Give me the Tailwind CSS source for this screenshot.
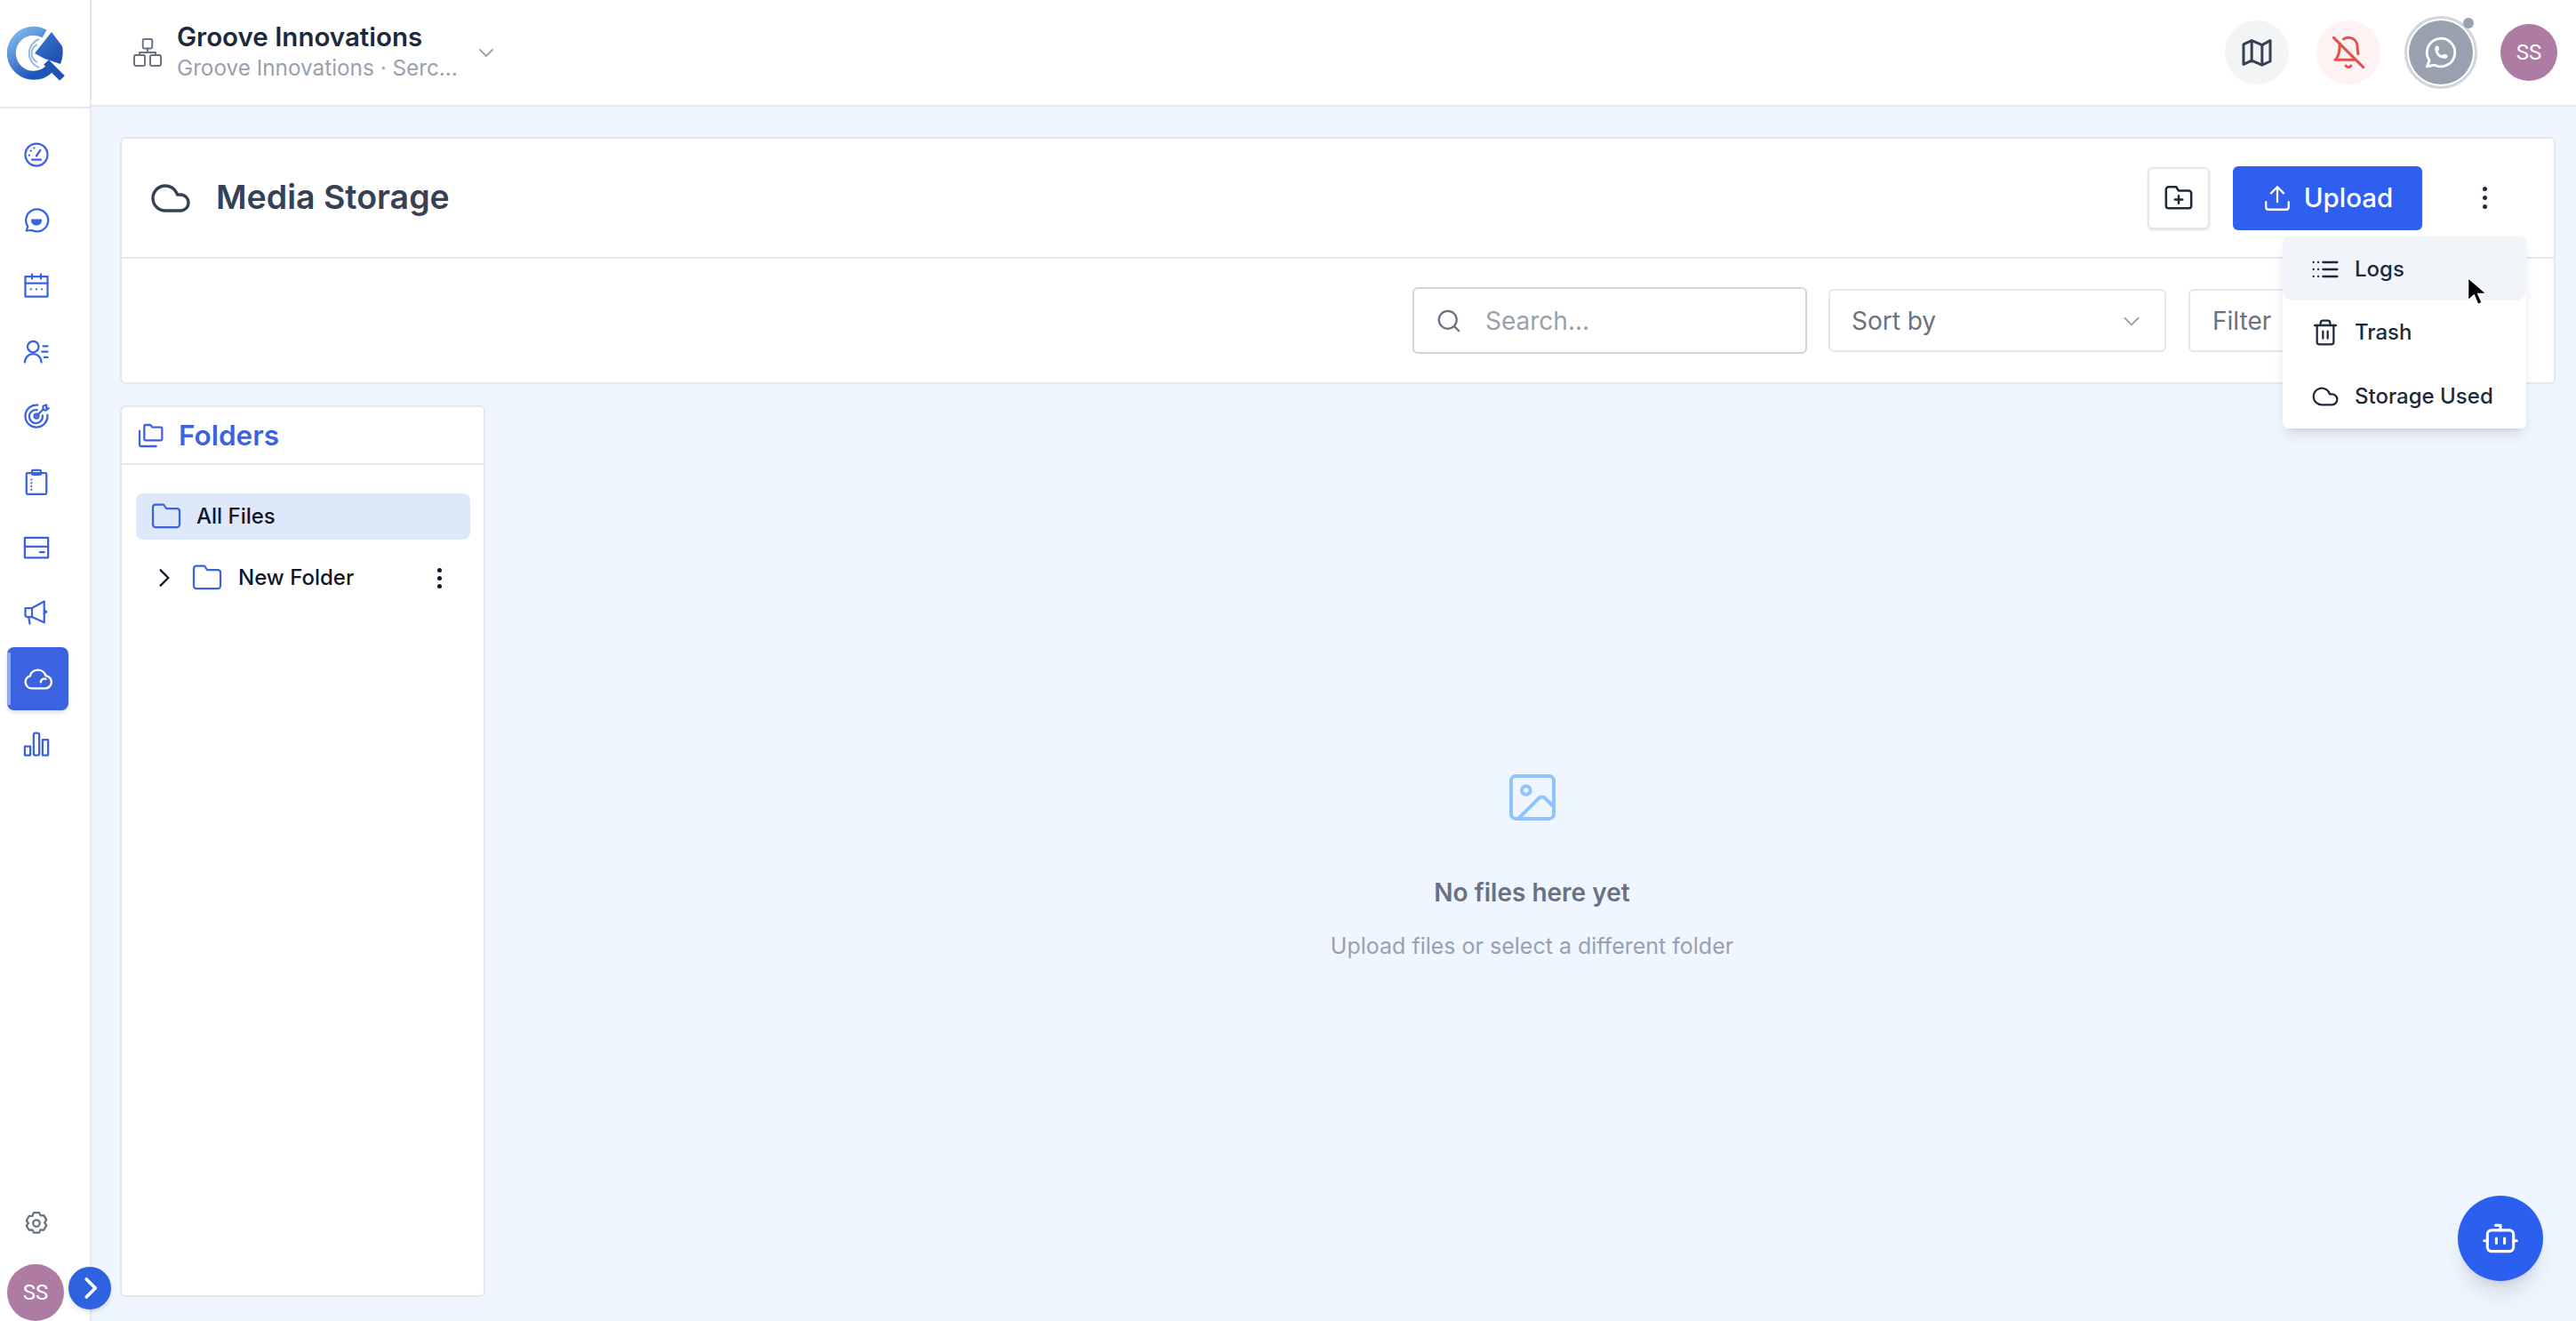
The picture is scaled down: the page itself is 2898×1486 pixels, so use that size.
<!DOCTYPE html>
<html lang="en">
  <head>
    <meta charset="UTF-8" />
    <title>Media Storage</title>
    <script src="https://cdn.jsdelivr.net/npm/@tailwindcss/browser@4"></script>
  </head>
  <body class="bg-blue-50 font-['Inter',sans-serif] text-gray-800">
    <div class="relative flex h-[1486px] w-[2898px] overflow-hidden">
      <!-- sidebar -->
      <aside class="flex w-[103px] shrink-0 flex-col border-r-2 border-gray-200 bg-white text-[#3b63e0]">
        <div class="flex h-[122px] shrink-0 items-center border-b-2 border-gray-200 pl-[8px]">
          <svg width="70" height="64" viewBox="0 0 70 64" fill="none">
            <defs>
              <linearGradient id="logoRing" x1="0" y1="0" x2="0.6" y2="1">
                <stop offset="0" stop-color="#84bcf0" />
                <stop offset="1" stop-color="#1f55b8" />
              </linearGradient>
              <linearGradient id="logoTri" x1="0" y1="0" x2="1" y2="1">
                <stop offset="0" stop-color="#3d7ad8" />
                <stop offset="1" stop-color="#1c4aa8" />
              </linearGradient>
            </defs>
            <path d="M42 10A25 25 0 1 0 47 50" stroke="url(#logoRing)" stroke-width="10" />
            <path d="M36 16A17 17 0 0 0 36 48" stroke="#9ab9e3" stroke-width="2" />
            <path d="M34 22A11 11 0 0 0 34 42" stroke="#9ab9e3" stroke-width="2" />
            <path d="M50 8L62 24Q64 34 60 44L42 38L31 32Z" fill="url(#logoTri)" />
            <path d="M44 42L62 60" stroke="#1f55b8" stroke-width="8" />
          </svg>
        </div>
        <nav class="flex flex-col gap-[2.7px] pt-[16px]">
          <a class="flex h-[71px] items-center justify-center pr-[20px]">
            <svg class="size-[30px]" viewBox="0 0 24 24" fill="none" stroke="currentColor" stroke-width="1.8" stroke-linecap="round" stroke-linejoin="round"><circle cx="12" cy="12" r="10" /><path d="M12 13l3.5-5M7 8.5h.01M5.5 12.5h.01M10 6h.01M8 16.5h8" /></svg>
          </a>
          <a class="flex h-[71px] items-center justify-center pr-[20px]">
            <svg class="size-[30px]" viewBox="0 0 24 24" fill="none" stroke="currentColor" stroke-width="1.8" stroke-linecap="round" stroke-linejoin="round"><path d="M3 22l1.2-3.8A10 10 0 1 1 8 21.6L3 22z" /><path d="M8 12.5h8a4 4 0 0 1-8 0z" fill="currentColor" /></svg>
          </a>
          <a class="flex h-[71px] items-center justify-center pr-[20px]">
            <svg class="size-[30px]" viewBox="0 0 24 24" fill="none" stroke="currentColor" stroke-width="1.8" stroke-linecap="round" stroke-linejoin="round"><rect x="2" y="4" width="20" height="18" /><path d="M2 10h20M8 2v4M16 2v4M7 15.5h.01M12 15.5h.01M17 15.5h.01" /></svg>
          </a>
          <a class="flex h-[71px] items-center justify-center pr-[20px]">
            <svg class="size-[30px]" viewBox="0 0 24 24" fill="none" stroke="currentColor" stroke-width="1.8" stroke-linecap="round" stroke-linejoin="round"><circle cx="9" cy="8" r="5" /><path d="M1.5 22a7.5 7.5 0 0 1 15 0M18 7.5h4M17 12.5h5M19 17.5h3" /></svg>
          </a>
          <a class="flex h-[71px] items-center justify-center pr-[20px]">
            <svg class="size-[30px]" viewBox="0 0 24 24" fill="none" stroke="currentColor" stroke-width="1.8" stroke-linecap="round" stroke-linejoin="round"><path d="M13 2.1A10 10 0 1 0 21.9 11" /><path d="M12.5 6.5A6 6 0 1 0 17.5 11.5" /><path d="M12 12l6-6M18 6V3l3-1v3h2l-3 2z" /><circle cx="12" cy="12" r="2" /></svg>
          </a>
          <a class="flex h-[71px] items-center justify-center pr-[20px]">
            <svg class="size-[30px]" viewBox="0 0 24 24" fill="none" stroke="currentColor" stroke-width="1.8" stroke-linecap="round" stroke-linejoin="round"><rect x="3" y="4" width="18" height="19" rx="1" /><rect x="8" y="1.5" width="8" height="4" rx="1" /><path d="M7.5 10h.01M7.5 13h.01M7.5 16h.01M7.5 19h.01" /></svg>
          </a>
          <a class="flex h-[71px] items-center justify-center pr-[20px]">
            <svg class="size-[30px]" viewBox="0 0 24 24" fill="none" stroke="currentColor" stroke-width="1.8" stroke-linecap="round" stroke-linejoin="round"><rect x="1.5" y="3" width="21" height="18" /><path d="M1.5 11h21M15 16h4" /></svg>
          </a>
          <a class="flex h-[71px] items-center justify-center pr-[20px]">
            <svg class="size-[30px]" viewBox="0 0 24 24" fill="none" stroke="currentColor" stroke-width="1.8" stroke-linecap="round" stroke-linejoin="round"><path d="M2 8h6l11-6v19L8 16H3.5L2 15z" /><path d="M8 8v8M5 16l1 6M19 10l2 1.5-2 1.5" /></svg>
          </a>
          <a class="relative ml-[8px] flex h-[71px] w-[69px] items-center justify-center rounded-[8px] bg-[#3b63e0] text-white shadow-md">
            <span class="absolute inset-y-[6px] left-0 w-[4px] bg-[#8fa8ee]"></span>
            <svg class="size-[34px]" viewBox="0 0 24 24" fill="none" stroke="currentColor" stroke-width="1.7" stroke-linecap="round" stroke-linejoin="round"><path d="M17 20H7a5 5 0 0 1-1.5-9.800A6.5 6.5 0 0 1 18 10a5 5 0 0 1-1 10z" /><path d="M14 15a3 3 0 0 1 4-2.5" /></svg>
          </a>
          <a class="flex h-[71px] items-center justify-center pr-[20px]">
            <svg class="size-[30px]" viewBox="0 0 24 24" fill="none" stroke="currentColor" stroke-width="1.8" stroke-linecap="round" stroke-linejoin="round"><rect x="1.5" y="14" width="5" height="8" /><rect x="9.5" y="2" width="5" height="20" rx="1.5" /><rect x="17.5" y="8" width="5" height="14" /></svg>
          </a>
        </nav>
        <div class="mt-auto flex flex-col">
          <div class="flex justify-center pr-[20px] text-gray-500">
            <svg class="size-[30px]" viewBox="0 0 24 24" fill="none" stroke="currentColor" stroke-width="1.8" stroke-linecap="round" stroke-linejoin="round"><path d="M9.5 2.5h5l1.2 2.6 2.9-.2 2.4 4.200-1.700 2.400 1.700 2.400-2.400 4.200-2.900-.2-1.200 2.600h-5l-1.200-2.600-2.900.2L3 14.400l1.700-2.400L3 9.600l2.400-4.200 2.900.2z" /><circle cx="12" cy="12" r="3" /></svg>
          </div>
          <div class="mt-[31px] ml-[8px] flex size-[64px] items-center justify-center rounded-full bg-[#ae7ba3] font-['Roboto',sans-serif] text-[24px] text-white">SS</div>
        </div>
      </aside>

      <div class="flex min-w-0 flex-1 flex-col">
        <!-- top bar -->
        <header class="flex h-[120px] shrink-0 items-center border-b-2 border-gray-200 bg-white pr-[21px] pl-[45px]">
          <svg class="mr-[15px] size-[36px] text-gray-500" viewBox="0 0 24 24" fill="none" stroke="currentColor" stroke-width="1.3" stroke-linecap="round" stroke-linejoin="round"><rect x="8.5" y="2" width="7" height="7" rx="1" /><rect x="2" y="14" width="8" height="8" rx="1" /><rect x="14" y="14" width="8" height="8" rx="1" /><path d="M12 9v3M6 14v-2h12v2" /></svg>
          <div class="w-[334px]">
            <div class="text-[29.5px] leading-[34px] font-semibold text-gray-800">Groove Innovations</div>
            <div class="truncate text-[24.3px] leading-[36px] text-gray-400">Groove Innovations · Serc...</div>
          </div>
          <svg class="ml-[2px] size-[24px] text-gray-400" viewBox="0 0 24 24" fill="none" stroke="currentColor" stroke-width="1.8" stroke-linecap="round" stroke-linejoin="round"><path d="M5 9l7 7 7-7" /></svg>
          <div class="ml-auto flex items-center">
            <button class="flex size-[72px] items-center justify-center rounded-full bg-gray-100 text-gray-700">
              <svg class="size-[40px]" viewBox="0 0 24 24" fill="none" stroke="currentColor" stroke-width="1.8" stroke-linecap="round" stroke-linejoin="round"><path d="M3 6.5l5.5-2.5 7 3 5.5-3v14l-5.5 2.5-7-3L3 20z" /><path d="M8.5 4v14M15.500 7v13" /></svg>
            </button>
            <button class="ml-[31px] flex size-[72px] items-center justify-center rounded-full bg-red-50 text-[#e0524a]">
              <svg class="size-[40px]" viewBox="0 0 24 24" fill="none" stroke="currentColor" stroke-width="1.8" stroke-linecap="round" stroke-linejoin="round"><path d="M8.7 3A6 6 0 0 1 18 8a21 21 0 0 0 .6 5M17 17H3s3-2 3-9a4.7 4.7 0 0 1 .3-2M10.3 21a2 2 0 0 0 3.4 0M2 2l20 20" /></svg>
            </button>
            <div class="relative ml-[27px] flex size-[82px] items-center justify-center rounded-full border-[3px] border-gray-300">
              <div class="flex size-[72px] items-center justify-center rounded-full bg-gray-400 text-white">
                <svg class="size-[42px]" viewBox="0 0 24 24" fill="none" stroke="currentColor" stroke-width="1.6" stroke-linecap="round" stroke-linejoin="round"><path d="M3 21l1.65-3.8a9 9 0 1 1 3.4 2.9L3 21" /><path d="M9 10a.5.5 0 0 0 1 0V9a.5.5 0 0 0-1 0v1a5 5 0 0 0 5 5h1a.5.5 0 0 0 0-1h-1a.5.5 0 0 0 0 1" /></svg>
              </div>
              <span class="absolute top-[-1px] right-[1px] size-[12px] rounded-full bg-gray-400"></span>
            </div>
            <div class="ml-[26px] flex size-[64px] items-center justify-center rounded-full bg-[#ae7ba3] font-['Roboto',sans-serif] text-[24px] text-white">SS</div>
          </div>
        </header>

        <main class="flex min-h-0 flex-1 flex-col pt-[34px] pr-[23px] pb-[27px] pl-[32px]">
          <!-- page card -->
          <section class="shrink-0 rounded-[6px] border-2 border-gray-200 bg-white">
            <div class="flex h-[135px] items-center border-b-2 border-gray-200 pr-[75px] pl-[31px]">
              <svg class="size-[48px] text-gray-700" viewBox="0 0 24 24" fill="none" stroke="currentColor" stroke-width="1.7" stroke-linecap="round" stroke-linejoin="round"><path d="M17.5 19H9a7 7 0 1 1 6.7-9h1.8a4.5 4.5 0 1 1 0 9z" /></svg>
              <h1 class="ml-[27px] text-[37.5px] font-semibold text-gray-700">Media Storage</h1>
              <button class="ml-auto flex h-[70px] w-[70px] items-center justify-center rounded-[6px] border-2 border-gray-200 bg-white text-gray-800 shadow-sm">
                <svg class="size-[34px]" viewBox="0 0 24 24" fill="none" stroke="currentColor" stroke-width="1.8" stroke-linecap="round" stroke-linejoin="round"><path d="M20 20a2 2 0 0 0 2-2V8a2 2 0 0 0-2-2h-8l-2-3H4a2 2 0 0 0-2 2v13a2 2 0 0 0 2 2z" /><path d="M12 10v6M9 13h6" /></svg>
              </button>
              <button class="ml-[26px] flex h-[72px] w-[213px] items-center justify-center gap-[13px] rounded-[6px] bg-[#2f5ff0] text-[29.5px] font-medium text-white">
                <svg class="size-[34px]" viewBox="0 0 24 24" fill="none" stroke="currentColor" stroke-width="1.6" stroke-linecap="round" stroke-linejoin="round"><path d="M21 15v4a2 2 0 0 1-2 2H5a2 2 0 0 1-2-2v-4M17 8l-5-5-5 5M12 3v12" /></svg>
                Upload
              </button>
              <button class="ml-[68px] flex flex-col gap-[5px] text-gray-800">
                <span class="size-[5px] rounded-full bg-gray-800"></span>
                <span class="size-[5px] rounded-full bg-gray-800"></span>
                <span class="size-[5px] rounded-full bg-gray-800"></span>
              </button>
            </div>
            <div class="flex h-[139px] items-center justify-end pr-[51px]">
              <div class="flex h-[75px] w-[444px] items-center rounded-[6px] border-2 border-gray-300 pl-[24px]">
                <svg class="size-[30px] text-gray-500" viewBox="0 0 24 24" fill="none" stroke="currentColor" stroke-width="1.8" stroke-linecap="round" stroke-linejoin="round"><circle cx="11" cy="11" r="8" /><path d="M21 21l-4.3-4.3" /></svg>
                <span class="ml-[26px] text-[28px] text-gray-400">Search...</span>
              </div>
              <div class="ml-[24px] flex h-[71px] w-[380px] items-center justify-between rounded-[6px] border-2 border-gray-200 pr-[24px] pl-[24px] text-[28px] text-gray-500">
                Sort by
                <svg class="size-[26px] text-gray-400" viewBox="0 0 24 24" fill="none" stroke="currentColor" stroke-width="1.8" stroke-linecap="round" stroke-linejoin="round"><path d="M5 9l7 7 7-7" /></svg>
              </div>
              <div class="ml-[25px] flex h-[71px] w-[360px] items-center rounded-[6px] border-2 border-gray-200 pl-[25px] text-[28px] text-gray-500">Filter</div>
            </div>
          </section>

          <div class="mt-[24px] flex min-h-0 flex-1">
            <!-- folders -->
            <aside class="flex w-[411px] shrink-0 flex-col rounded-[6px] border-2 border-gray-200 bg-white">
              <div class="flex h-[65px] items-center gap-[16px] border-b-2 border-gray-200 pl-[16px] text-[#3b63e0]">
                <svg class="size-[32px]" viewBox="0 0 24 24" fill="none" stroke="currentColor" stroke-width="1.7" stroke-linecap="round" stroke-linejoin="round"><path d="M7 15V4a1 1 0 0 1 1-1h4l2 2h7a1 1 0 0 1 1 1v9a1 1 0 0 1-1 1H8a1 1 0 0 1-1-1z" /><path d="M3 8v12a1 1 0 0 0 1 1h13" /></svg>
                <span class="text-[31.5px] font-semibold">Folders</span>
              </div>
              <div class="flex flex-col gap-[17px] pt-[32px] pr-[15px] pl-[16px]">
                <div class="flex h-[52px] items-center gap-[16px] rounded-[8px] bg-[#dee8fb] pl-[16px]">
                  <svg class="size-[36px] text-[#3b63e0]" viewBox="0 0 24 24" fill="none" stroke="currentColor" stroke-width="1.5" stroke-linecap="round" stroke-linejoin="round"><path d="M20 20a2 2 0 0 0 2-2V8a2 2 0 0 0-2-2h-8l-2-3H4a2 2 0 0 0-2 2v13a2 2 0 0 0 2 2z" /></svg>
                  <span class="text-[24px] font-medium text-gray-900">All Files</span>
                </div>
                <div class="flex h-[52px] items-center pl-[19px]">
                  <svg class="size-[26px] text-gray-900" viewBox="0 0 24 24" fill="none" stroke="currentColor" stroke-width="2.2" stroke-linecap="round" stroke-linejoin="round"><path d="M8 4l8 8-8 8" /></svg>
                  <svg class="ml-[17px] size-[36px] text-[#3b63e0]" viewBox="0 0 24 24" fill="none" stroke="currentColor" stroke-width="1.5" stroke-linecap="round" stroke-linejoin="round"><path d="M20 20a2 2 0 0 0 2-2V8a2 2 0 0 0-2-2h-8l-2-3H4a2 2 0 0 0-2 2v13a2 2 0 0 0 2 2z" /></svg>
                  <span class="ml-[17px] text-[24px] font-medium text-gray-900">New Folder</span>
                  <span class="mr-[32px] ml-auto flex flex-col gap-[4px]">
                    <span class="size-[5px] rounded-full bg-gray-900"></span>
                    <span class="size-[5px] rounded-full bg-gray-900"></span>
                    <span class="size-[5px] rounded-full bg-gray-900"></span>
                  </span>
                </div>
              </div>
            </aside>

            <!-- empty state -->
            <div class="flex flex-1 flex-col items-center pt-[409px] pl-[26px]">
              <svg class="size-[64px] text-blue-300" viewBox="0 0 24 24" fill="none" stroke="currentColor" stroke-width="1.5" stroke-linecap="round" stroke-linejoin="round"><rect x="3" y="3" width="18" height="18" rx="2" /><circle cx="9.3" cy="9" r="1.8" /><path d="M6 21l8.5-8.500a2 2 0 0 1 3 0L21 16" /></svg>
              <div class="mt-[54px] text-[28px] font-semibold text-gray-500">No files here yet</div>
              <div class="mt-[21px] text-[25px] text-gray-400">Upload files or select a different folder</div>
            </div>
          </div>
        </main>
      </div>

      <!-- overlays -->
      <button class="absolute top-[1425px] left-[77px] flex size-[48px] items-center justify-center rounded-full bg-[#2f62de] text-white shadow-md">
        <svg class="size-[30px]" viewBox="0 0 24 24" fill="none" stroke="currentColor" stroke-width="3" stroke-linecap="round" stroke-linejoin="round"><path d="M9 4l8 8-8 8" /></svg>
      </button>

      <div class="absolute top-[266px] left-[2568px] w-[274px] rounded-[6px] bg-white text-[24px] font-medium text-gray-800 shadow-lg">
        <div class="flex h-[72px] items-center gap-[17px] rounded-t-[6px] rounded-b-[12px] bg-[#f1f4f9] pt-[2px] pl-[32px]">
          <svg class="size-[32px]" viewBox="0 0 24 24" fill="none" stroke="currentColor" stroke-width="1.7" stroke-linecap="round" stroke-linejoin="round"><path d="M2 6h.01M6 6h.01M2 12h.01M6 12h.01M2 18h.01M6 18h.01M10 6h12M10 12h12M10 18h12" /></svg>
          Logs
        </div>
        <div class="flex h-[72px] items-center gap-[17px] pl-[32px]">
          <svg class="size-[32px]" viewBox="0 0 24 24" fill="none" stroke="currentColor" stroke-width="1.7" stroke-linecap="round" stroke-linejoin="round"><path d="M3 6h18M19 6v14a2 2 0 0 1-2 2H7a2 2 0 0 1-2-2V6M8 6V4a2 2 0 0 1 2-2h4a2 2 0 0 1 2 2v2M10 11v6M14 11v6" /></svg>
          Trash
        </div>
        <div class="flex h-[72px] items-center gap-[17px] pl-[32px]">
          <svg class="size-[32px]" viewBox="0 0 24 24" fill="none" stroke="currentColor" stroke-width="1.7" stroke-linecap="round" stroke-linejoin="round"><path d="M17.5 19H9a7 7 0 1 1 6.7-9h1.8a4.5 4.5 0 1 1 0 9z" /></svg>
          Storage Used
        </div>
      </div>

      <!-- mouse pointer from the capture -->
      <svg class="absolute top-[311px] left-[2775px] h-[36px] w-[24px]" viewBox="0 0 16 24"><path d="M1 1v17l4.5-4 3 7 3-1.300-3-6.700H15z" fill="#000" stroke="#fff" stroke-width="1" /></svg>

      <button class="absolute top-[1345px] left-[2765px] flex size-[96px] items-center justify-center rounded-full bg-[#2b5ff0] text-white shadow-xl">
        <svg class="size-[44px]" viewBox="0 0 24 24" fill="none" stroke="currentColor" stroke-width="1.7" stroke-linecap="round" stroke-linejoin="round"><rect x="4" y="7" width="16" height="13" rx="2.5" /><path d="M12 7V4H9M2 13.5h2M20 13.5h2M9.5 12v3M14.5 12v3" /></svg>
      </button>
    </div>
  </body>
</html>
